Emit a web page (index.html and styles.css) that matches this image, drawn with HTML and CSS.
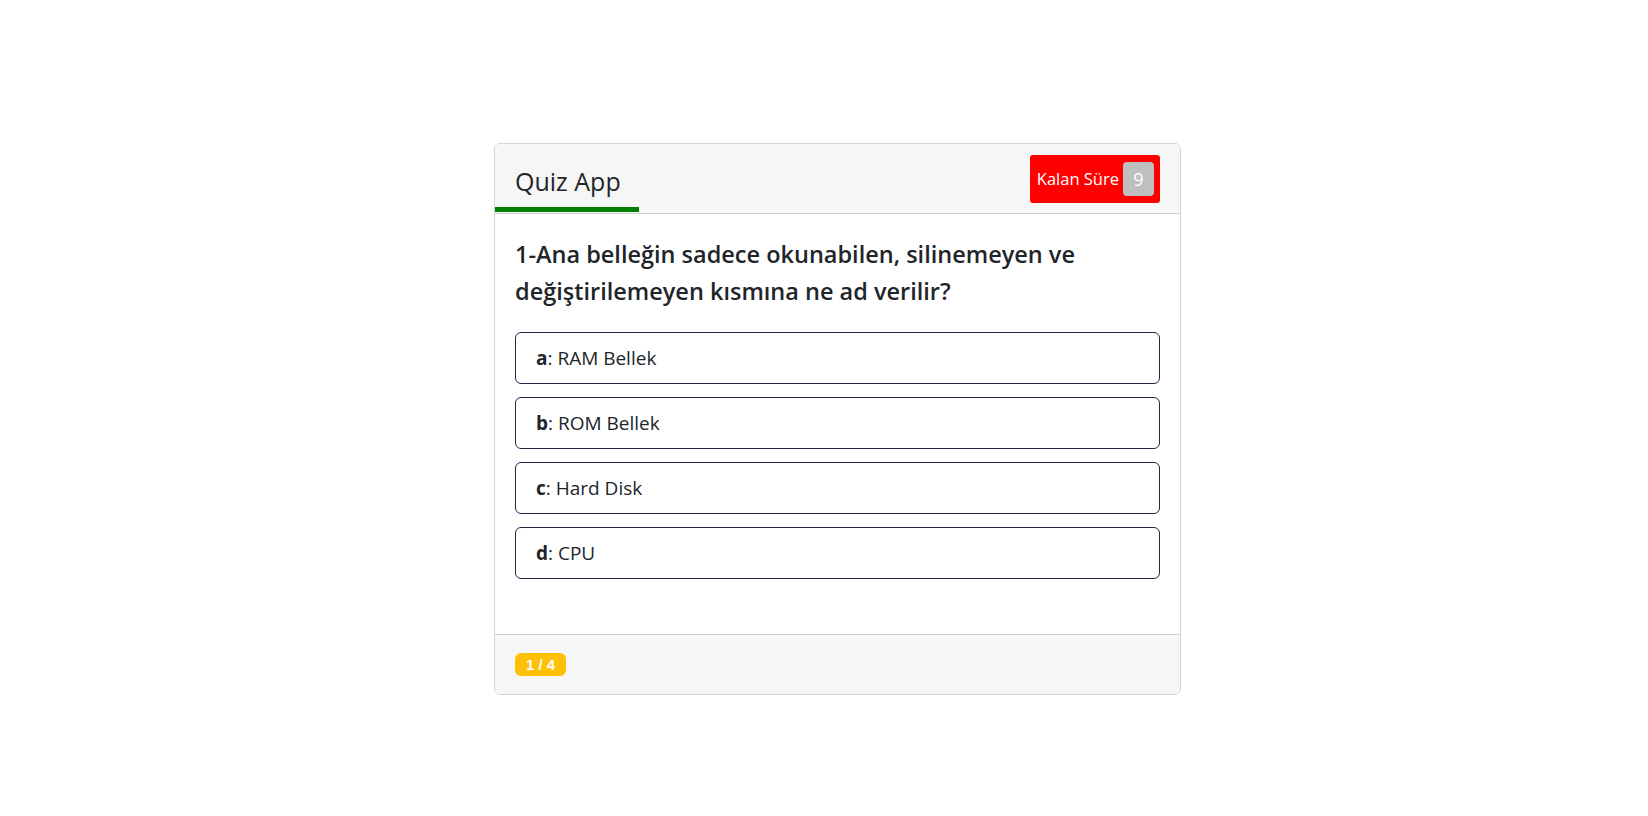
FILE: index.html
```html
<!DOCTYPE html>
<html lang="tr">
<head>
<meta charset="utf-8">
<title>Quiz App</title>
<link rel="stylesheet" href="styles.css">
</head>
<body>
<div class="card">
  <div class="card-header">
    <div class="tab">Quiz App</div>
    <div class="timer">
      <span class="timer-label">Kalan Süre</span>
      <span class="timer-value">9</span>
    </div>
  </div>
  <div class="card-body">
    <h5 class="question">1-Ana belleğin sadece okunabilen, silinemeyen ve değiştirilemeyen kısmına ne ad verilir?</h5>
    <div class="options">
      <div class="option"><b>a</b>: RAM Bellek</div>
      <div class="option"><b>b</b>: ROM Bellek</div>
      <div class="option"><b>c</b>: Hard Disk</div>
      <div class="option"><b>d</b>: CPU</div>
    </div>
  </div>
  <div class="card-footer">
    <span class="badge">1 / 4</span>
  </div>
</div>
</body>
</html>
```
FILE: styles.css
```css
* { box-sizing: border-box; }
body {
  margin: 0;
  background: #fff;
  font-family: "Open Sans", "Noto Sans", sans-serif;
  color: #212529;
}
.card {
  width: 687px;
  margin: 143px 0 0 494px;
  border: 1px solid #d4d4d4;
  border-radius: 6px;
  overflow: hidden;
}
.card-header {
  height: 70px;
  background: #f6f6f6;
  border-bottom: 1px solid #cfcfcf;
  display: flex;
  justify-content: space-between;
  align-items: center;
  padding-right: 20px;
}
.tab {
  align-self: flex-end;
  width: 144px;
  padding: 0 0 8px 20px;
  font-size: 25px;
  font-weight: 500;
  line-height: 36px;
  color: #212529;
  border-bottom: 5px solid #008000;
  margin-bottom: 1px;
  white-space: nowrap;
}
.timer {
  display: flex;
  align-items: center;
  gap: 4px;
  height: 48px;
  padding: 0 6px 0 7px;
  background: #ff0000;
  border-radius: 3px;
  color: #fff;
}
.timer-label {
  font-size: 16.5px;
}
.timer-value {
  width: 31px;
  height: 34px;
  background: #bfbfbf;
  border-radius: 4px;
  display: flex;
  align-items: center;
  justify-content: center;
  font-size: 18px;
}
.card-body {
  padding: 22px 20px 20px;
}
.question {
  margin: 0 0 22px;
  font-size: 23.5px;
  font-weight: 600;
  line-height: 37px;
}
.options {
  display: flex;
  flex-direction: column;
  gap: 13px;
  margin-bottom: 35px;
}
.option {
  height: 52px;
  display: flex;
  align-items: center;
  padding: 0 20px;
  border: 1px solid #1f2947;
  border-radius: 6px;
  font-size: 19px;
}
.option b { font-weight: 700; }
.card-footer {
  height: 60px;
  background: #f6f6f6;
  border-top: 1px solid #cfcfcf;
  display: flex;
  align-items: center;
  padding: 0 20px;
}
.badge {
  display: inline-flex;
  align-items: center;
  justify-content: center;
  width: 51px;
  height: 23px;
  background: #ffc107;
  color: #fff;
  border-radius: 6px;
  font-family: "Liberation Sans", Arial, sans-serif;
  font-weight: 700;
  font-size: 15px;
}
```
